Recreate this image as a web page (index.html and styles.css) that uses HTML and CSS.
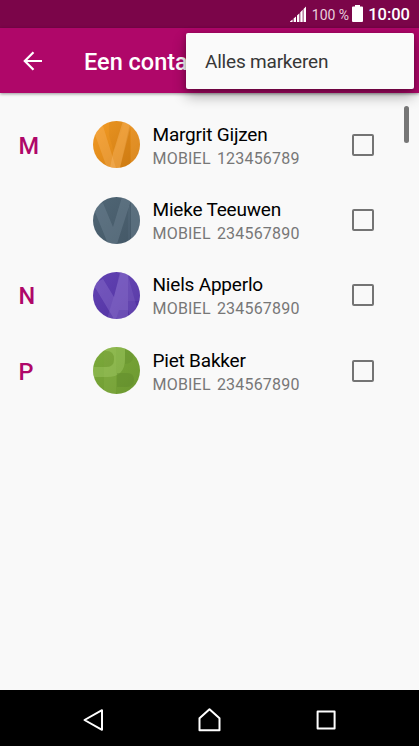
FILE: index.html
```html
<!DOCTYPE html>
<html lang="nl">
<head>
<meta charset="utf-8">
<title>Een contact</title>
<link rel="stylesheet" href="styles.css">
</head>
<body>
<div class="phone">
  <header class="status">
    <svg class="signal" width="17" height="17" viewBox="0 0 17 17"><path d="M0 15.5L2.6 13.5V16H0zM3.6 12.4L6 10.4V16H3.6zM7 9.4L9.400 7.200V16H7zM10.300 6.300L12.700 3.700V16H10.300zM13.500 3L16 .5V16H13.500z" fill="#fff"/></svg>
    <span class="percent">100 %</span>
    <svg class="battery" width="11" height="17" viewBox="0 0 11 17"><path d="M3 0h5v1.500h2a1 1 0 0 1 1 1V16a1 1 0 0 1-1 1H1a1 1 0 0 1-1-1V2.500a1 1 0 0 1 1-1h2z" fill="#fff"/></svg>
    <span class="clock">10:00</span>
  </header>
  <div class="appbar">
    <svg class="back" width="20" height="20" viewBox="0 0 20 20"><path d="M19 10H2M10.500 1.300L1.800 10l8.700 8.700" fill="none" stroke="#fff" stroke-width="2.200"/></svg>
    <h1 class="title">Een conta</h1>
    <div class="menu"><span class="menu-item">Alles markeren</span></div>
  </div>
  <main class="list">
    <div class="row">
      <span class="letter">M</span>
      <svg class="avatar" viewBox="0 0 47 47">
        <defs>
          <clipPath id="disc"><circle cx="23.500" cy="23.500" r="23.500"/></clipPath>
          <linearGradient id="orange" x1="0" y1="0" x2="1" y2="1"><stop offset="0" stop-color="#f39b25"/><stop offset="1" stop-color="#d27e12"/></linearGradient>
        </defs>
        <g clip-path="url(#disc)">
          <path d="M0 0h47v47H0z" fill="url(#orange)"/>
          <path d="M16 0h16L21 31 16 14z" fill="#bd7015" opacity=".15"/>
          <path d="M0 8L10 5 23 47H14z" fill="#ffc27a" opacity=".28"/>
          <path d="M30 0h9L27 47H17l3-15z" fill="#ffc27a" opacity=".33"/>
          <path d="M37 3v44H27z" fill="#bc6b0c" opacity=".25"/>
          <path d="M38 0h9v47h-9z" fill="#ffc27a" opacity=".14"/>
        </g>
      </svg>
      <div class="info"><span class="name">Margrit Gijzen</span><span class="number">MOBIEL 123456789</span></div>
      <span class="check"></span>
    </div>
    <div class="row">
      <span class="letter"></span>
      <svg class="avatar" viewBox="0 0 47 47">
        <defs><linearGradient id="slate" x1="0" y1="0" x2="1" y2="1"><stop offset="0" stop-color="#506675"/><stop offset="1" stop-color="#435766"/></linearGradient></defs>
        <g clip-path="url(#disc)">
          <path d="M0 0h47v47H0z" fill="url(#slate)"/>
          <path d="M0 10L10 6l10 24L29 0h10L24 47H15z" fill="#8096a4" opacity=".3"/>
          <path d="M38 0h9v47h-9z" fill="#8096a4" opacity=".33"/>
          <path d="M35 9h2v38h-2z" fill="#8096a4" opacity=".1"/>
        </g>
      </svg>
      <div class="info"><span class="name">Mieke Teeuwen</span><span class="number">MOBIEL 234567890</span></div>
      <span class="check"></span>
    </div>
    <div class="row">
      <span class="letter">N</span>
      <svg class="avatar" viewBox="0 0 47 47">
        <defs><linearGradient id="purple" x1="0" y1="0" x2="1" y2="1"><stop offset="0" stop-color="#6243b3"/><stop offset="1" stop-color="#5030a0"/></linearGradient></defs>
        <g clip-path="url(#disc)">
          <path d="M0 0h47v47H0z" fill="url(#purple)"/>
          <path d="M0 12L10 7l11 18L27 0h8v47H21z" fill="#9b82d7" opacity=".32"/>
          <path d="M28 0h6l13 47h-9l-3-9H26l-3 9h-9z" fill="#9b82d7" opacity=".2"/>
          <path d="M35 0h12v29H35z" fill="#9b82d7" opacity=".12"/>
        </g>
      </svg>
      <div class="info"><span class="name">Niels Apperlo</span><span class="number">MOBIEL 234567890</span></div>
      <span class="check"></span>
    </div>
    <div class="row">
      <span class="letter">P</span>
      <svg class="avatar" viewBox="0 0 47 47">
        <defs><linearGradient id="green" x1="0" y1="0" x2="1" y2="1"><stop offset="0" stop-color="#7caa3b"/><stop offset="1" stop-color="#6c9830"/></linearGradient></defs>
        <g clip-path="url(#disc)">
          <path d="M0 0h47v47H0z" fill="url(#green)"/>
          <path d="M11 0h12v47H11z" fill="#a5cc68" opacity=".15"/>
          <path d="M0 20h13q8 0 8-8 0-8-8-8l-4-4h23v12q0 18-18 18H0z" fill="#a5cc68" opacity=".4"/>
          <path d="M11 4h4q6 0 6 8t-6 8h-4z" fill="#658f2d" opacity=".15"/>
          <path d="M32 3q8 1 8 7t-8 7z" fill="#5b862a" opacity=".25"/>
          <path d="M24 26h10q7 0 7 7t-7 7H24z" fill="#5b862a" opacity=".38"/>
        </g>
      </svg>
      <div class="info"><span class="name">Piet Bakker</span><span class="number">MOBIEL 234567890</span></div>
      <span class="check"></span>
    </div>
    <div class="scrollbar"></div>
  </main>
  <nav class="navbar">
    <svg width="24" height="26" viewBox="0 0 24 26"><path d="M2.500 13L20 3.200V22.800z" fill="none" stroke="#fff" stroke-width="2" stroke-linejoin="round"/></svg>
    <svg width="24" height="26" viewBox="0 0 24 26"><path d="M1.500 23.200V11.300L11.500 2.200l10 9.100V23.200z" fill="none" stroke="#fff" stroke-width="2" stroke-linejoin="round"/></svg>
    <svg width="24" height="26" viewBox="0 0 24 26"><path d="M3.600 4.600h17v17h-17z" fill="none" stroke="#fff" stroke-width="2" stroke-linejoin="round"/></svg>
  </nav>
</div>
</body>
</html>
```

FILE: styles.css
```css
body { margin: 0; font-family: Roboto, "Liberation Sans", sans-serif; background: #f9f9f9; }
.phone { width: 419px; height: 746px; display: flex; flex-direction: column; overflow: hidden; }
.status { height: 28px; flex: none; display: flex; align-items: center; box-sizing: border-box; padding-right: 9px; justify-content: flex-end; background: #7b0549; color: #fff; white-space: nowrap; }
.signal { margin: 0 5px 0 0; }
.percent { font-size: 14px; line-height: 28px; color: #e8cfdd; padding-top: 1px; }
.battery { margin: 0 5px 2px 3px; }
.clock { font-size: 16.500px; font-weight: 500; line-height: 28px; padding-top: 2px; }
.appbar { position: relative; z-index: 1; height: 65px; flex: none; display: flex; align-items: center; background: #af0769; box-shadow: 0 1px 3px rgba(0,0,0,.4); }
.back { margin-left: 23px; }
.title { margin: 2px 0 0 41px; font-size: 23.500px; line-height: 28px; font-weight: 500; color: #fff; white-space: nowrap; }
.menu { position: absolute; left: 186px; top: 5px; width: 228px; height: 56px; display: flex; align-items: center; box-sizing: border-box; padding: 1px 0 0 19px; background: #fafafa; border-radius: 2px; box-shadow: 0 7px 14px rgba(0,0,0,.32), 0 1px 5px rgba(0,0,0,.25); }
.menu-item { font-size: 19px; line-height: 24px; letter-spacing: -.2px; color: #373737; white-space: nowrap; }
.list { position: relative; flex: 1; padding-top: 14px; }
.row { height: 75.400px; display: grid; grid-template-columns: 74px 47px 212px 22px; align-items: center; padding-left: 19px; }
.letter { font-size: 23.500px; font-weight: 500; line-height: 28px; color: #af0769; padding-top: 2px; margin-left: -.5px; }
.avatar { width: 47px; height: 47px; display: block; }
.info { padding: 4px 0 0 12.500px; display: flex; flex-direction: column; white-space: nowrap; }
.name { font-size: 19px; line-height: 24px; letter-spacing: -.2px; color: #000; }
.number { font-size: 16px; line-height: 24px; letter-spacing: .2px; word-spacing: 2px; color: #777; }
.check { box-sizing: border-box; width: 22px; height: 22px; border: 2px solid #747474; border-radius: 2px; }
.scrollbar { position: absolute; right: 10px; top: 13px; width: 5px; height: 37px; border-radius: 3px; background: #777; }
.navbar { height: 56px; flex: none; display: flex; justify-content: space-between; align-items: center; box-sizing: border-box; padding: 3px 81px 0 82px; background: #000; }
```
